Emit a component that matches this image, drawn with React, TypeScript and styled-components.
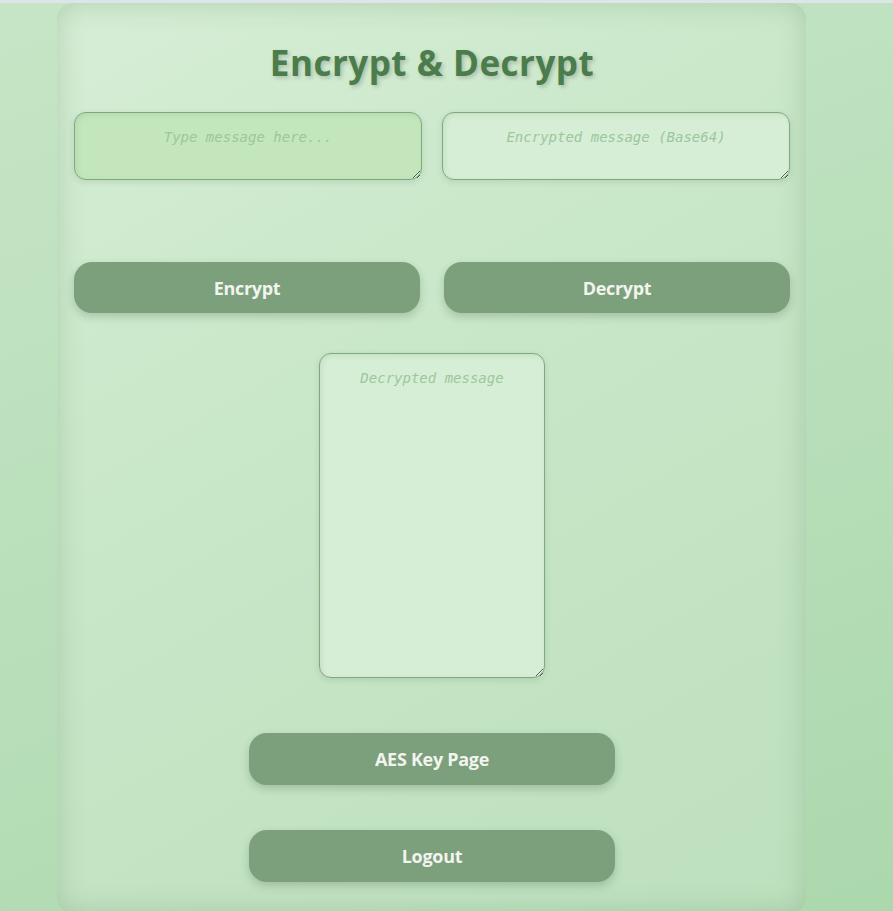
import React from "react";
import styled, { createGlobalStyle } from "styled-components";

const GlobalStyle = createGlobalStyle`
  html, body { margin: 0; padding: 0; }
  body {
    background: #dde5e8;
    font-family: "Open Sans", "Noto Sans", sans-serif;
  }
  #root { min-height: 100vh; }
`;

const Page = styled.div`
  margin-top: 3px;
  min-height: 908px;
  background: linear-gradient(160deg, #c6e5c6 0%, #b9dfba 50%, #acd8ad 100%);
  padding-left: 57px;
  box-sizing: border-box;
  overflow: hidden;
`;

const Card = styled.main`
  width: 749px;
  box-sizing: border-box;
  padding: 37px 16px 31px 17px;
  border-radius: 16px;
  background: linear-gradient(150deg, #d6eed6 0%, #c9e7c9 40%, #bde0bd 100%);
  box-shadow: inset 0 0 28px rgba(90, 140, 90, 0.3);
  display: flex;
  flex-direction: column;
  align-items: center;
`;

const Title = styled.h1`
  margin: 0 0 26px;
  font-size: 35px;
  line-height: 46px;
  font-weight: 700;
  letter-spacing: 0.5px;
  color: #4b7c4b;
  text-shadow: 2px 2px 4px rgba(0, 0, 0, 0.2);
`;

const Pair = styled.div<{ $gap: number }>`
  width: 100%;
  display: grid;
  grid-template-columns: 1fr 1fr;
  column-gap: ${(p) => p.$gap}px;
`;

const Field = styled.textarea<{ $tone: "input" | "output"; $w?: number; $h: number }>`
  box-sizing: border-box;
  width: ${(p) => (p.$w ? `${p.$w}px` : "100%")};
  height: ${(p) => p.$h}px;
  padding: 16px 12px 14px;
  border: 1px solid #80a880;
  border-radius: 12px;
  background: ${(p) => (p.$tone === "input" ? "#c3e6bd" : "#d6eed6")};
  box-shadow: inset 2px 2px 5px rgba(80, 130, 80, 0.12), 0 2px 6px rgba(60, 100, 60, 0.15);
  font-family: "DejaVu Sans Mono", monospace;
  font-size: 14px;
  font-style: italic;
  color: #3f6a3f;
  text-align: center;
  outline: none;
  &::placeholder {
    color: #9cc79c;
    font-style: italic;
  }
`;

const Button = styled.button<{ $w?: number; $h?: number }>`
  box-sizing: border-box;
  width: ${(p) => (p.$w ? `${p.$w}px` : "100%")};
  height: ${(p) => p.$h ?? 51}px;
  border: none;
  border-radius: 18px;
  background: #7c9f7c;
  color: #f2f4ee;
  font-family: "Open Sans", "Noto Sans", sans-serif;
  font-size: 18px;
  font-weight: 700;
  letter-spacing: -0.3px;
  box-shadow: 0 4px 8px rgba(40, 70, 40, 0.22);
  cursor: pointer;
`;

const Spacer = styled.div<{ $h: number }>`
  height: ${(p) => p.$h}px;
  flex: none;
`;

export default function App() {
  return (
    <>
      <GlobalStyle />
      <Page>
        <Card>
          <Title>Encrypt &amp; Decrypt</Title>
          <Pair $gap={20}>
            <Field $tone="input" $h={68} placeholder="Type message here..." />
            <Field $tone="output" $h={68} placeholder="Encrypted message (Base64)" />
          </Pair>
          <Spacer $h={82} />
          <Pair $gap={24}>
            <Button>Encrypt</Button>
            <Button>Decrypt</Button>
          </Pair>
          <Spacer $h={40} />
          <Field $tone="output" $w={226} $h={325} placeholder="Decrypted message" />
          <Spacer $h={55} />
          <Button $w={366} $h={52}>AES Key Page</Button>
          <Spacer $h={45} />
          <Button $w={366} $h={52}>Logout</Button>
        </Card>
      </Page>
    </>
  );
}
